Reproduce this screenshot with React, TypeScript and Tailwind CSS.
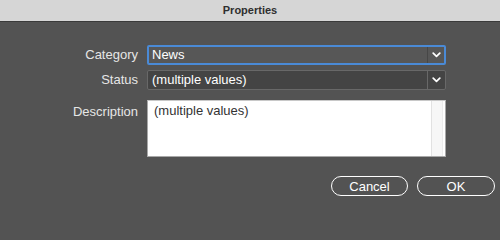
import React from 'react'

const Chevron = () => (
  <svg width="9" height="6" viewBox="0 0 9 6" fill="none">
    <polyline points="1.2,1.2 4.5,4.4 7.8,1.2" stroke="#ffffff" strokeWidth="1.7" strokeLinecap="round" strokeLinejoin="round" />
  </svg>
)

export default function App() {
  return (
    <div className="min-h-screen bg-[#535353]">
      <div className="w-[500px] min-h-[207px] bg-[#535353] flex flex-col font-['Liberation_Sans',sans-serif]">
        {/* Title bar */}
        <div className="h-[22px] shrink-0 bg-[#d6d6d6] border-b border-[#3a3a3a] flex items-center justify-center">
          <span className="text-[11px] font-bold text-[#2f2f2f]">Properties</span>
        </div>

        {/* Form */}
        <div className="flex flex-col pt-[23px]">
          <div className="flex items-center h-[20px]">
            <label className="w-[138px] text-right text-[13px] text-[#e6e6e6]">Category</label>
            <div className="ml-[9px] w-[299px] h-[20px] flex border-2 border-[#4a8ad6] bg-[#575757] rounded-[2px]">
              <span className="flex-1 pl-[3px] text-[13px] leading-[16px] text-white">News</span>
              <div className="w-[17px] flex items-center justify-center border-l border-[#474747]">
                <Chevron />
              </div>
            </div>
          </div>

          <div className="flex items-center h-[20px] mt-[5px]">
            <label className="w-[138px] text-right text-[13px] text-[#e6e6e6]">Status</label>
            <div className="ml-[9px] w-[299px] h-[20px] flex border border-[#686868] bg-[#444444] rounded-[2px]">
              <span className="flex-1 pl-[4px] text-[13px] leading-[18px] text-white">(multiple values)</span>
              <div className="w-[18px] flex items-center justify-center border-l border-[#686868]">
                <Chevron />
              </div>
            </div>
          </div>

          <div className="flex items-start mt-[10px]">
            <label className="w-[138px] text-right text-[13px] text-[#e6e6e6] pt-[2px]">Description</label>
            <div className="ml-[9px] w-[299px] h-[57px] flex bg-white border border-[#a8a8a8] border-t-[#c8c8c8]">
              <span className="flex-1 pl-[6px] pt-[2px] text-[13px] leading-[16px] text-[#333333]">(multiple values)</span>
              <div className="w-[12px] bg-[#f7f7f7] border-l border-[#e2e2e2] border-r border-r-[#ececec] mr-[2px]" />
            </div>
          </div>

          <div className="flex justify-end gap-[9px] pr-[5px] mt-[19px]">
            <button className="w-[77px] h-[20px] rounded-full border-[1.5px] border-white text-[13px] text-white leading-none">Cancel</button>
            <button className="w-[78px] h-[20px] rounded-full border-[1.5px] border-white text-[13px] text-white leading-none">OK</button>
          </div>
        </div>
      </div>
    </div>
  )
}
